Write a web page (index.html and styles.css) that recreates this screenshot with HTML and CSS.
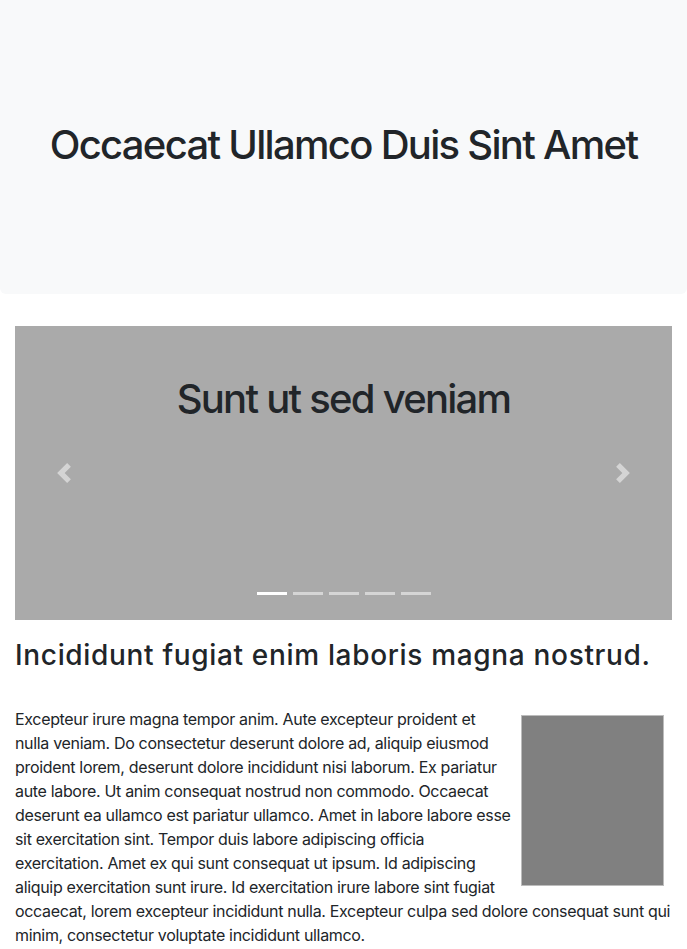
FILE: index.html
```html
<!DOCTYPE html>
<html lang="en">
<head>
<meta charset="utf-8">
<title>Page</title>
<link rel="stylesheet" href="styles.css">
</head>
<body>
<header class="jumbotron">
  <h1 class="jumbo-title">Occaecat Ullamco Duis Sint Amet</h1>
</header>
<main class="container">
  <div class="carousel">
    <div class="slide">
      <h2 class="caption">Sunt ut sed veniam</h2>
    </div>
    <a class="control control-prev" href="#">
      <svg width="20" height="20" viewBox="0 0 8 8"><path fill="#fff" d="M5.25 0l-4 4 4 4 1.5-1.5L4.25 4l2.5-2.5L5.25 0z"/></svg>
    </a>
    <a class="control control-next" href="#">
      <svg width="20" height="20" viewBox="0 0 8 8"><path fill="#fff" d="M2.75 0l-1.5 1.5L3.75 4l-2.5 2.5L2.75 8l4-4-4-4z"/></svg>
    </a>
    <ol class="indicators">
      <li class="active"></li>
      <li></li>
      <li></li>
      <li></li>
      <li></li>
    </ol>
  </div>
  <h2 class="section-title">Incididunt fugiat enim laboris magna nostrud.</h2>
  <div class="content">
    <div class="thumb"></div>
    <p class="text">Excepteur irure magna tempor anim. Aute excepteur proident et nulla veniam. Do consectetur deserunt dolore ad, aliquip eiusmod proident lorem, deserunt dolore incididunt nisi laborum. Ex pariatur aute labore. Ut anim consequat nostrud non commodo. Occaecat deserunt ea ullamco est pariatur ullamco. Amet in labore labore esse sit exercitation sint. Tempor duis labore adipiscing officia exercitation. Amet ex qui sunt consequat ut ipsum. Id adipiscing aliquip exercitation sunt irure. Id exercitation irure labore sint fugiat occaecat, lorem excepteur incididunt nulla. Excepteur culpa sed dolore consequat sunt qui minim, consectetur voluptate incididunt ullamco.</p>
  </div>
</main>
</body>
</html>
```

FILE: styles.css
```css
* { box-sizing: border-box; }
html, body { margin: 0; padding: 0; }
body {
  font-family: Inter, "Liberation Sans", sans-serif;
  font-size: 16px;
  line-height: 1.5;
  color: #212529;
  background: #fff;
}
.jumbotron {
  height: 294px;
  padding-bottom: 4px;
  background: #f8f9fa;
  border-radius: 0 0 6px 6px;
  display: flex;
  align-items: center;
  justify-content: center;
  margin-bottom: 32px;
}
.jumbo-title {
  margin: 0;
  font-size: 40px;
  font-weight: 500;
  line-height: 1.2;
  letter-spacing: -1.7px;
  text-align: center;
}
.container {
  padding: 0 15px;
}
.carousel {
  position: relative;
  height: 294px;
  background: #aaa;
}
.slide {
  height: 100%;
  padding-top: 49px;
  text-align: center;
}
.caption {
  margin: 0;
  font-size: 40px;
  font-weight: 500;
  line-height: 1.2;
  letter-spacing: -1.75px;
}
.control {
  position: absolute;
  top: 0;
  bottom: 0;
  width: 15%;
  display: flex;
  align-items: center;
  justify-content: center;
  opacity: 0.5;
}
.control-prev { left: 0; }
.control-next { right: 0; }
.indicators {
  position: absolute;
  left: 0;
  right: 0;
  bottom: 25px;
  margin: 0;
  padding: 0;
  list-style: none;
  display: flex;
  justify-content: center;
  gap: 6px;
}
.indicators li {
  width: 30px;
  height: 3px;
  background: rgba(255,255,255,0.5);
}
.indicators li.active { background: #fff; }
.section-title {
  margin: 19px 0 34px;
  font-size: 28px;
  font-weight: 500;
  line-height: 1.2;
  letter-spacing: 0.67px;
}
.thumb {
  float: right;
  width: 143px;
  height: 171px;
  margin: 8px 8px 8px 10px;
  background: #808080;
  border: 1px solid #bcbcbc;
}
.text {
  margin: 0;
  letter-spacing: -0.33px;
}
```
